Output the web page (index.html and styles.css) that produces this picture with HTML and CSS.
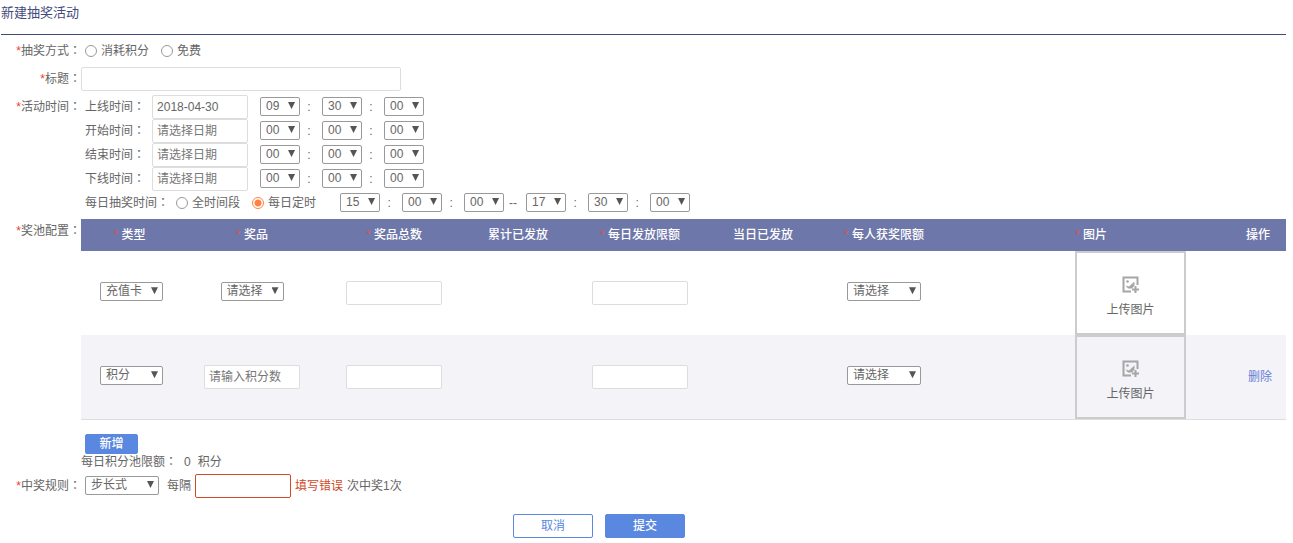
FILE: index.html
```html
<!DOCTYPE html>
<html lang="zh-CN">
<head>
<meta charset="utf-8">
<title>新建抽奖活动</title>
<link rel="stylesheet" href="styles.css">
</head>
<body>
<main class="page">
  <h1 class="page-title">新建抽奖活动</h1>
  <form class="form">
    <div class="field" role="radiogroup" aria-labelledby="mode-label">
      <span class="field-label" id="mode-label"><i class="star">*</i>抽奖方式<span class="colon">：</span></span>
      <div class="line inset radios">
        <label class="radio"><input type="radio" name="mode">消耗积分</label>
        <label class="radio"><input type="radio" name="mode">免费</label>
      </div>
    </div>

    <div class="field">
      <label class="field-label" for="title"><i class="star">*</i>标题<span class="colon">：</span></label>
      <div class="line"><input class="text wide" id="title" type="text"></div>
    </div>

    <div class="field">
      <span class="field-label"><i class="star">*</i>活动时间<span class="colon">：</span></span>
      <div class="inset">
        <div class="line">
          <label class="time-label" for="online">上线时间<span class="colon">：</span></label>
          <input class="text" id="online" type="text" value="2018-04-30">
          <div class="clock">
            <span class="select"><select aria-label="上线时"><option>09</option></select></span><span class="sep">:</span>
            <span class="select"><select aria-label="上线分"><option>30</option></select></span><span class="sep">:</span>
            <span class="select"><select aria-label="上线秒"><option>00</option></select></span>
          </div>
        </div>
        <div class="line">
          <label class="time-label" for="start">开始时间<span class="colon">：</span></label>
          <input class="text" id="start" type="text" placeholder="请选择日期">
          <div class="clock">
            <span class="select"><select aria-label="开始时"><option>00</option></select></span><span class="sep">:</span>
            <span class="select"><select aria-label="开始分"><option>00</option></select></span><span class="sep">:</span>
            <span class="select"><select aria-label="开始秒"><option>00</option></select></span>
          </div>
        </div>
        <div class="line">
          <label class="time-label" for="end">结束时间<span class="colon">：</span></label>
          <input class="text" id="end" type="text" placeholder="请选择日期">
          <div class="clock">
            <span class="select"><select aria-label="结束时"><option>00</option></select></span><span class="sep">:</span>
            <span class="select"><select aria-label="结束分"><option>00</option></select></span><span class="sep">:</span>
            <span class="select"><select aria-label="结束秒"><option>00</option></select></span>
          </div>
        </div>
        <div class="line">
          <label class="time-label" for="offline">下线时间<span class="colon">：</span></label>
          <input class="text" id="offline" type="text" placeholder="请选择日期">
          <div class="clock">
            <span class="select"><select aria-label="下线时"><option>00</option></select></span><span class="sep">:</span>
            <span class="select"><select aria-label="下线分"><option>00</option></select></span><span class="sep">:</span>
            <span class="select"><select aria-label="下线秒"><option>00</option></select></span>
          </div>
        </div>
        <div class="line">
          <span class="time-label">每日抽奖时间<span class="colon">：</span></span>
          <div class="radios">
            <label class="radio"><input type="radio" name="daily">全时间段</label>
            <label class="radio"><input type="radio" name="daily" checked>每日定时</label>
          </div>
          <div class="clock range">
            <span class="select"><select aria-label="每日开始时"><option>15</option></select></span><span class="sep">:</span>
            <span class="select"><select aria-label="每日开始分"><option>00</option></select></span><span class="sep">:</span>
            <span class="select"><select aria-label="每日开始秒"><option>00</option></select></span><span class="sep">--</span>
            <span class="select"><select aria-label="每日结束时"><option>17</option></select></span><span class="sep">:</span>
            <span class="select"><select aria-label="每日结束分"><option>30</option></select></span><span class="sep">:</span>
            <span class="select"><select aria-label="每日结束秒"><option>00</option></select></span>
          </div>
        </div>
      </div>
    </div>

    <div class="field">
      <span class="field-label"><i class="star">*</i>奖池配置<span class="colon">：</span></span>
      <div>
        <table class="pool">
          <colgroup>
            <col class="c-type"><col class="c-prize"><col class="c-total"><col class="c-sent"><col class="c-quota"><col class="c-today"><col class="c-person"><col class="c-image"><col class="c-action">
          </colgroup>
          <thead>
            <tr>
              <th><i class="star">*</i> 类型</th>
              <th><i class="star">*</i> 奖品</th>
              <th><i class="star">*</i> 奖品总数</th>
              <th>累计已发放</th>
              <th><i class="star">*</i> 每日发放限额</th>
              <th>当日已发放</th>
              <th><i class="star">*</i> 每人获奖限额</th>
              <th><i class="star">*</i> 图片</th>
              <th>操作</th>
            </tr>
          </thead>
          <tbody>
            <tr>
              <td><span class="select medium"><select aria-label="类型"><option>充值卡</option></select></span></td>
              <td><span class="select medium"><select aria-label="奖品"><option>请选择</option></select></span></td>
              <td><input class="text" type="text" aria-label="奖品总数"></td>
              <td></td>
              <td><input class="text" type="text" aria-label="每日发放限额"></td>
              <td></td>
              <td><span class="select large"><select aria-label="每人获奖限额"><option>请选择</option></select></span></td>
              <td class="image-cell">
                <button class="upload" type="button">
                  <svg class="upload-icon" viewBox="0 0 17 17" aria-hidden="true">
                    <path d="M9 15.500H1.500V1.500H15.500V9" fill="none" stroke="#a6a6a6" stroke-width="2"/>
                    <circle cx="5.500" cy="5.500" r="1.300" fill="#a6a6a6"/>
                    <path d="M3.500 9.500L7 10.500L12.500 5.500V9.500L10 12.500H6Z" fill="#a6a6a6"/>
                    <path d="M13.500 10V17M10 13.500H17" fill="none" stroke="#a6a6a6" stroke-width="2"/>
                  </svg>
                  上传图片
                </button>
              </td>
              <td></td>
            </tr>
            <tr>
              <td><span class="select medium"><select aria-label="类型"><option>积分</option></select></span></td>
              <td><input class="text" type="text" aria-label="积分数" placeholder="请输入积分数"></td>
              <td><input class="text" type="text" aria-label="奖品总数"></td>
              <td></td>
              <td><input class="text" type="text" aria-label="每日发放限额"></td>
              <td></td>
              <td><span class="select large"><select aria-label="每人获奖限额"><option>请选择</option></select></span></td>
              <td class="image-cell">
                <button class="upload" type="button">
                  <svg class="upload-icon" viewBox="0 0 17 17" aria-hidden="true">
                    <path d="M9 15.500H1.500V1.500H15.500V9" fill="none" stroke="#a6a6a6" stroke-width="2"/>
                    <circle cx="5.500" cy="5.500" r="1.300" fill="#a6a6a6"/>
                    <path d="M3.500 9.500L7 10.500L12.500 5.500V9.500L10 12.500H6Z" fill="#a6a6a6"/>
                    <path d="M13.500 10V17M10 13.500H17" fill="none" stroke="#a6a6a6" stroke-width="2"/>
                  </svg>
                  上传图片
                </button>
              </td>
              <td class="action-cell"><a class="link" href="#">删除</a></td>
            </tr>
          </tbody>
        </table>
        <div class="inset"><button class="btn primary small" type="button">新增</button></div>
        <p class="limit"><span>每日积分池限额<span class="colon">：</span></span><span>0</span><span>积分</span></p>
      </div>
    </div>

    <div class="field">
      <label class="field-label" for="rule"><i class="star">*</i>中奖规则<span class="colon">：</span></label>
      <div class="line inset rule">
        <span class="select large"><select id="rule"><option>步长式</option></select></span>
        <label class="step" for="step">每隔</label>
        <input class="text invalid" id="step" type="text">
        <span class="error">填写错误</span>
        <span>次中奖1次</span>
      </div>
    </div>

    <div class="actions">
      <button class="btn" type="button">取消</button>
      <button class="btn primary" type="submit">提交</button>
    </div>
  </form>
</main>
</body>
</html>
```

FILE: styles.css
```css
* { box-sizing: border-box; }

body {
  margin: 0;
  background: #fff;
  color: #666;
  font: 12px/24px "Liberation Sans", "Noto Sans CJK SC", sans-serif;
}

input, select, button { margin: 0; font: inherit; color: inherit; }

.page { padding: 0 7px 0 1px; }

.page-title {
  margin: 0;
  padding: 1px 0 9px;
  border-bottom: 1px solid #434a7c;
  color: #434a7c;
  font-size: 13px;
  font-weight: 400;
}

.form { display: flex; flex-direction: column; gap: 4px; padding-top: 4px; }

.field { display: grid; grid-template-columns: 80px minmax(0, 1fr); }
.field-label { text-align: right; white-space: nowrap; }
.star { color: #f23c2e; font-style: normal; }
.colon {
  font-family: "Noto Sans CJK TC", sans-serif;
  line-height: 1;
  -webkit-locale: "zh-TW";
}

.line { display: flex; align-items: center; height: 24px; }
.inset { padding-left: 4px; }

.radios { display: flex; gap: 12px; }
.radio { display: flex; align-items: center; gap: 4px; }
.radio input {
  appearance: none;
  width: 12px;
  height: 12px;
  border: 1px solid #999;
  border-radius: 50%;
  background: #fff;
}
.radio input:checked {
  border-color: #ff8340;
  background: radial-gradient(circle, #ff8340 3px, #fff 4px);
}

.text {
  width: 96px;
  height: 24px;
  padding: 0 4px;
  border: 1px solid #ddd;
  border-radius: 2px;
  background: #fff;
  vertical-align: middle;
}
.text::placeholder { color: #777; opacity: 1; }
.text.wide { width: 320px; }
.text.invalid { border-color: #d2492a; }

.select { display: inline-grid; width: 40px; height: 19px; margin-bottom: 1px; vertical-align: middle; }
.select.medium { width: 63px; }
.select.large { width: 74px; }
.select select {
  grid-area: 1 / 1;
  appearance: none;
  width: 100%;
  height: 19px;
  padding: 0 0 0 5px;
  border: 1px solid #999;
  border-radius: 2px;
  background: #fff;
  line-height: 17px;
}
.select::after {
  content: "";
  grid-area: 1 / 1;
  z-index: 1;
  justify-self: end;
  width: 7px;
  height: 7px;
  margin: 5px 5px 0 0;
  background: #555;
  clip-path: polygon(0 0, 100% 0, 50% 100%);
  pointer-events: none;
}

.time-label { margin-right: 7px; white-space: nowrap; }
.clock { display: flex; align-items: center; margin-left: 12px; }
.clock.range { margin-left: 24px; }
.sep { width: 22px; padding-right: 4px; text-align: center; }

.pool { width: 100%; border-collapse: collapse; table-layout: fixed; border-bottom: 1px solid #ddd; text-align: center; }
.pool th { height: 32px; padding: 0; background: #6e77aa; color: #fff; font-weight: 500; white-space: nowrap; }
.pool th:first-child { padding-right: 4px; }
.pool th .star { color: #d9534f; font-weight: 400; }
.pool td { height: 84px; padding: 0; }
.pool td .select { margin-bottom: 4px; }
.pool tbody tr:nth-child(even) { background: #f3f3f8; }
.c-type { width: 101px; }
.c-prize { width: 140px; }
.c-total { width: 144px; }
.c-sent { width: 104px; }
.c-quota { width: 140px; }
.c-today { width: 106px; }
.c-person { width: 136px; }
.c-image { width: 278px; }
.c-action { width: 56px; }
.pool .image-cell { padding-left: 79px; }
.pool .action-cell { padding-left: 4px; }

.upload {
  display: flex;
  flex-direction: column;
  align-items: center;
  justify-content: center;
  gap: 7px;
  width: 111px;
  height: 84px;
  margin: 0 auto;
  padding: 10px 0 0;
  border: 2px solid #ccc;
  background: transparent;
  line-height: 20px;
}
.upload-icon { width: 17px; height: 17px; }

.link { color: #6a7fd6; text-decoration: none; }

.btn {
  width: 80px;
  height: 24px;
  padding: 0;
  border: 1px solid #5a87e0;
  border-radius: 2px;
  background: #fff;
  color: #5a87e0;
  line-height: 20px;
}
.btn.primary { background: #5a87e0; color: #fff; font-weight: 500; }
.btn.small { display: block; width: 53px; height: 20px; margin-top: 14px; line-height: 18px; }

.limit { display: flex; gap: 7px; margin: 0; line-height: 16px; }

.rule { gap: 4px; }
.step { padding-left: 4px; }
.error { color: #d2492a; }

.actions { display: flex; justify-content: center; gap: 12px; padding: 12px 89px 5px 0; }
```
